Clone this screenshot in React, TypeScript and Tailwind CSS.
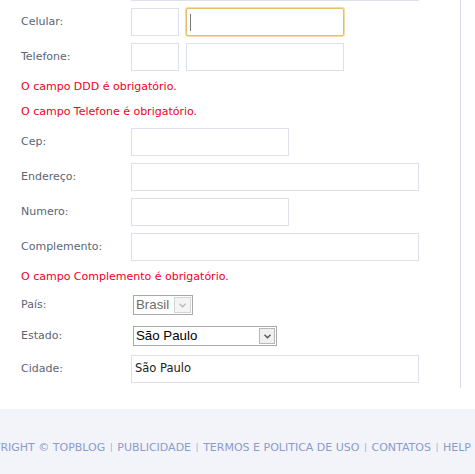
import React from "react";

const labelFont = { fontFamily: '"DejaVu Sans", Verdana, sans-serif' };

function Field({ label, children, h = "h-[28px]" }: { label: string; children: React.ReactNode; h?: string }) {
  return (
    <div className={`flex items-center ${h}`}>
      <span className="w-[110px] shrink-0 text-[11px] text-[#5b6576]">{label}</span>
      {children}
    </div>
  );
}

function Box({ w, children }: { w: string; children?: React.ReactNode }) {
  return (
    <div className={`${w} h-[28px] border border-[#dde0ea] bg-white flex items-center`}>{children}</div>
  );
}

function Erro({ children, className = "" }: { children: React.ReactNode; className?: string }) {
  return <p className={`h-[16px] leading-[16px] text-[11px] text-[#f0001c] ${className}`}>{children}</p>;
}

function Chevron({ color }: { color: string }) {
  return (
    <svg width="7" height="5" viewBox="0 0 7 5">
      <path d="M0.5 0.8 L3.5 3.8 L6.5 0.8" fill="none" stroke={color} strokeWidth="1.4" />
    </svg>
  );
}

export default function App() {
  return (
    <div className="w-[475px] h-[474px] overflow-hidden bg-white" style={labelFont}>
      <div className="w-[461px] border-r border-[#d9d9ee] pl-[21px] pb-[5px]">
        <div className="ml-[110px] w-[288px] h-px bg-[#dde0ea]" />

        <div className="mt-[7px]">
          <Field label="Celular:">
            <Box w="w-[48px]" />
            <div className="ml-[7px] w-[158px] h-[28px] border border-[#e6bf6a] rounded-[2px] shadow-[0_0_0_1px_#f2dca6] bg-white flex items-center">
              <span className="ml-[3px] w-px h-[17px] bg-[#777]" />
            </div>
          </Field>
        </div>

        <div className="mt-[7px]">
          <Field label="Telefone:">
            <Box w="w-[48px]" />
            <div className="ml-[7px]">
              <Box w="w-[158px]" />
            </div>
          </Field>
        </div>

        <Erro className="mt-[8px]">O campo DDD é obrigatório.</Erro>
        <Erro className="mt-[9px]">O campo Telefone é obrigatório.</Erro>

        <div className="mt-[8px] flex flex-col gap-[7px]">
          <Field label="Cep:">
            <Box w="w-[158px]" />
          </Field>
          <Field label="Endereço:">
            <Box w="w-[288px]" />
          </Field>
          <Field label="Numero:">
            <Box w="w-[158px]" />
          </Field>
          <Field label="Complemento:">
            <Box w="w-[288px]" />
          </Field>
        </div>

        <Erro className="mt-[8px]">O campo Complemento é obrigatório.</Erro>

        <div className="mt-[10px]">
          <Field label="País:" h="h-[20px]">
            <div
              className="ml-[2px] w-[60px] h-[20px] border border-[#a9a9a9] bg-white flex items-center justify-between pl-[2px] pr-px"
              style={{ fontFamily: '"Liberation Sans", Arial, sans-serif' }}
            >
              <span className="text-[13.3px] text-[#6d6d6d] leading-none">Brasil</span>
              <span className="w-[17px] h-[16px] border border-[#d4d4d4] bg-[#f4f4f4] flex items-center justify-center">
                <Chevron color="#b9b9b9" />
              </span>
            </div>
          </Field>
        </div>

        <div className="mt-[11px]">
          <Field label="Estado:" h="h-[20px]">
            <div
              className="ml-[2px] w-[144px] h-[20px] border border-[#a9a9a9] bg-white flex items-center justify-between pl-[2px] pr-px"
              style={{ fontFamily: '"Liberation Sans", Arial, sans-serif' }}
            >
              <span className="text-[13.3px] text-black leading-none">São Paulo</span>
              <span className="w-[16px] h-[16px] border border-[#b8b8b8] bg-[#f0f0f0] flex items-center justify-center">
                <Chevron color="#555" />
              </span>
            </div>
          </Field>
        </div>

        <div className="mt-[9px]">
          <Field label="Cidade:">
            <Box w="w-[288px]">
              <span className="pl-[3px] text-[11.5px] text-[#222]">São Paulo</span>
            </Box>
          </Field>
        </div>
      </div>

      <div className="mt-[21px] h-[65px] bg-[#f3f4fa] flex items-center justify-end overflow-hidden pr-[4px]">
        <div className="flex items-center whitespace-nowrap text-[11px] text-[#8b9bcb] pt-[13px]">
          <span>COPYRIGHT © TOPBLOG</span>
          <span className="px-[4.5px] text-[9px] text-[#a3b0d6]">|</span>
          <span>PUBLICIDADE</span>
          <span className="px-[4.5px] text-[9px] text-[#a3b0d6]">|</span>
          <span>TERMOS E POLITICA DE USO</span>
          <span className="px-[4.5px] text-[9px] text-[#a3b0d6]">|</span>
          <span>CONTATOS</span>
          <span className="px-[4.5px] text-[9px] text-[#a3b0d6]">|</span>
          <span>HELP</span>
        </div>
      </div>
    </div>
  );
}
